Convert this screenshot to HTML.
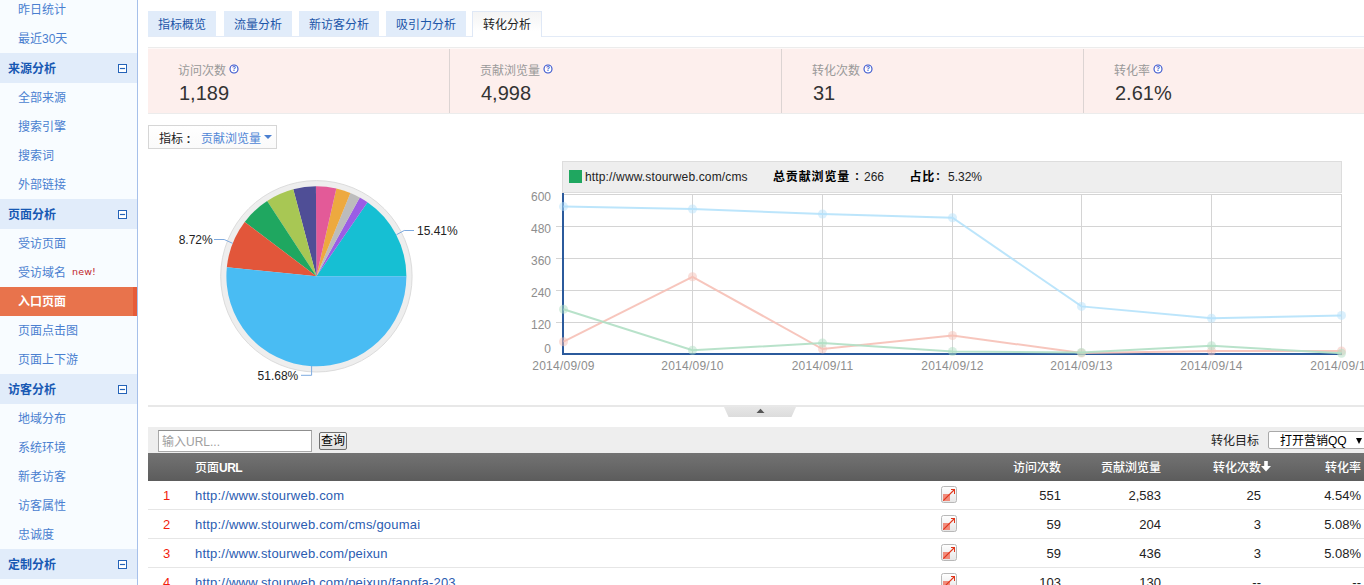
<!DOCTYPE html>
<html lang="zh-CN">
<head>
<meta charset="utf-8">
<title>入口页面 - 转化分析</title>
<style>
*{box-sizing:border-box;margin:0;padding:0}
html,body{width:1364px;height:585px;overflow:hidden;background:#fff}
body{position:relative;font-family:"Liberation Sans","Noto Sans CJK SC",sans-serif;font-size:12px;color:#333}
.abs{position:absolute}
/* sidebar */
#side{position:absolute;left:0;top:-5px;width:138px;height:600px;background:#f8fcff;border-right:1px solid #a6c0ea}
#side .it{height:29px;line-height:27px;padding-top:2px;padding-left:18px;color:#4a7fd0;font-size:12px;position:relative;white-space:nowrap}
#side .hd{height:30px;line-height:28px;padding-top:2px;padding-left:8px;color:#1758b3;font-weight:bold;font-size:12px;background:#e1ecfa;position:relative}
#side .hd i{position:absolute;left:118px;top:11px;width:9px;height:9px;border:1px solid #2463b8;background:#fff}
#side .hd i:after{content:"";position:absolute;left:1px;top:3px;width:5px;height:1px;box-shadow:0 0 1px #2463b8;background:#2463b8}
#side .act{background:#e8734c;color:#fff;font-weight:bold;border-right:4px solid #e65c39}
#side .new{color:#c0272d;font-size:9.5px;margin-left:6px;position:relative;top:-2px;font-family:"DejaVu Sans","Liberation Sans",sans-serif;letter-spacing:.15px}
/* tabs */
.tab{position:absolute;top:11px;height:26px;line-height:28px;text-align:center;background:#e1ecfa;color:#1c55a8;font-size:12px}
.tab.on{background:linear-gradient(#f4f4f4,#fff 80%);color:#222;border:1px solid #dfe8f6;border-bottom:none;height:26px;line-height:27px}
#tabline{position:absolute;left:148px;top:36px;width:1216px;height:1px;background:#e3ebf7}
/* stats */
#stats{position:absolute;left:148px;top:47px;width:1216px;height:67px;background:linear-gradient(to bottom,#fef8f7 0,#fef8f7 1px,#fdefed 1px);border-top:1px solid #ececec;border-bottom:1px solid #ececec}
#stats .c{position:absolute;top:1px;height:64px;border-left:1px solid #dcd4d3}
#stats .l{position:absolute;left:30px;top:14px;color:#999;font-size:12px;white-space:nowrap;line-height:16px}
#stats .v{position:absolute;left:31px;top:31px;color:#333;font-size:20px;line-height:26px;white-space:nowrap}
.q{display:inline-block;width:10px;height:10px;vertical-align:top;margin-top:1px;margin-left:3px;overflow:visible}
/* selector */
#sel{position:absolute;left:148px;top:125px;width:129px;height:24px;border:1px solid #d6d6d6;background:linear-gradient(#fff,#fafafa);line-height:21px;padding-top:3px;padding-left:10px;font-size:12px;color:#222;white-space:nowrap}
#sel span{color:#4f86d6;margin-left:7px}
#sel em{font-style:normal;display:inline-block;width:11px;text-align:center;font-weight:bold}
#sel b{position:absolute;left:115px;top:9px;border:4px solid transparent;border-top:4px solid #4a7fd0;border-bottom:none}
/* table */
#fbar .inp{position:absolute;left:10px;top:3px;width:154px;height:22px;border:1px solid #a9a9a9;border-top-color:#8f8f8f;background:#fff;color:#a0a0a0;font-size:12px;line-height:22px;padding-left:3px}
#fbar .btn{position:absolute;left:171px;top:5px;width:28px;height:18px;border:1px solid #707070;border-radius:2px;background:linear-gradient(#f6f6f6,#dedede);color:#000;font-size:12px;line-height:17px;text-align:center}
#fbar .lbl{position:absolute;left:1063px;top:0;line-height:28px;color:#222;font-size:12px}
#fbar .slt{position:absolute;left:1120px;top:4px;width:110px;height:18px;border:1px solid #a9a9a9;border-radius:2px;background:#fff;color:#000;font-size:12px;line-height:18px;padding-left:11px;white-space:nowrap}
#fbar .slt i{position:absolute;left:87px;top:6px;font-size:0;border:3.5px solid transparent;border-top:6px solid #000;border-bottom:none}
.ico{position:absolute;left:793px;top:5px}

#fbar{position:absolute;left:148px;top:427px;width:1216px;height:26px;background:#eee}
#thead{position:absolute;left:148px;top:453px;width:1216px;height:28px;background:linear-gradient(#737373,#5c5c5c);color:#fff;font-weight:500;font-size:12px;line-height:30px}
.row{color:#222;position:absolute;left:148px;width:1216px;height:29px;border-bottom:1px solid #e6e6e6;line-height:30px;font-size:13px}
.row span,#thead span{position:absolute;white-space:nowrap}
.row .n{left:15px;color:#f21d0d;font-size:13px}
.row .u{left:47px;color:#2b5cb1;letter-spacing:.21px}
.r{text-align:right}
</style>
</head>
<body>
<div id="side">
<div class="it">昨日统计</div>
<div class="it">最近30天</div>
<div class="hd">来源分析<i></i></div>
<div class="it">全部来源</div>
<div class="it">搜索引擎</div>
<div class="it">搜索词</div>
<div class="it">外部链接</div>
<div class="hd">页面分析<i></i></div>
<div class="it">受访页面</div>
<div class="it">受访域名<span class="new">new!</span></div>
<div class="it act">入口页面</div>
<div class="it">页面点击图</div>
<div class="it">页面上下游</div>
<div class="hd">访客分析<i></i></div>
<div class="it">地域分布</div>
<div class="it">系统环境</div>
<div class="it">新老访客</div>
<div class="it">访客属性</div>
<div class="it">忠诚度</div>
<div class="hd">定制分析<i></i></div>
<div class="it">&nbsp;</div>
</div>

<div class="tab" style="left:148px;width:68px">指标概览</div>
<div class="tab" style="left:224px;width:68px">流量分析</div>
<div class="tab" style="left:299px;width:80px">新访客分析</div>
<div class="tab" style="left:386px;width:80px">吸引力分析</div>
<div id="tabline"></div>
<div class="tab on" style="left:472px;width:70px">转化分析</div>

<div id="stats">
<div class="c" style="left:0;width:301px;border-left:none"><div class="l">访问次数<svg class="q" viewBox="0 0 10 10"><circle cx="5" cy="5" r="4" fill="#fff" stroke="#3350cc" stroke-width="1.1"/><text x="5" y="7.4" font-size="6.5" font-weight="bold" text-anchor="middle" fill="#3350cc" font-family="Liberation Sans, sans-serif">?</text></svg></div><div class="v">1,189</div></div>
<div class="c" style="left:301px;width:332px"><div class="l">贡献浏览量<svg class="q" viewBox="0 0 10 10"><circle cx="5" cy="5" r="4" fill="#fff" stroke="#3350cc" stroke-width="1.1"/><text x="5" y="7.4" font-size="6.5" font-weight="bold" text-anchor="middle" fill="#3350cc" font-family="Liberation Sans, sans-serif">?</text></svg></div><div class="v">4,998</div></div>
<div class="c" style="left:633px;width:302px"><div class="l">转化次数<svg class="q" viewBox="0 0 10 10"><circle cx="5" cy="5" r="4" fill="#fff" stroke="#3350cc" stroke-width="1.1"/><text x="5" y="7.4" font-size="6.5" font-weight="bold" text-anchor="middle" fill="#3350cc" font-family="Liberation Sans, sans-serif">?</text></svg></div><div class="v">31</div></div>
<div class="c" style="left:935px;width:281px"><div class="l">转化率<svg class="q" viewBox="0 0 10 10"><circle cx="5" cy="5" r="4" fill="#fff" stroke="#3350cc" stroke-width="1.1"/><text x="5" y="7.4" font-size="6.5" font-weight="bold" text-anchor="middle" fill="#3350cc" font-family="Liberation Sans, sans-serif">?</text></svg></div><div class="v">2.61%</div></div>
</div>

<div id="sel">指标<em>:</em><span>贡献浏览量</span><b></b></div>

<!-- CHARTS -->
<svg class="abs" style="left:148px;top:155px" width="1216" height="250" viewBox="148 155 1216 250" font-family="Liberation Sans, sans-serif" font-size="12">
<!-- pie -->
<g id="pie">
<circle cx="316.4" cy="276.3" r="95.7" fill="#eeeeee" stroke="#dcdcdc" stroke-width="1"/>
<path d="M316.4,276.3L406.40,276.30A90,90 0 0 0 367.51,202.22Z" fill="#16bfd3"/>
<path d="M316.4,276.3L367.51,202.22A90,90 0 0 0 359.76,197.43Z" fill="#9b5de5"/>
<path d="M316.4,276.3L359.76,197.43A90,90 0 0 0 350.41,192.97Z" fill="#bcbcbc"/>
<path d="M316.4,276.3L350.41,192.97A90,90 0 0 0 336.34,188.54Z" fill="#eda93f"/>
<path d="M316.4,276.3L336.34,188.54A90,90 0 0 0 315.93,186.30Z" fill="#e35a98"/>
<path d="M316.4,276.3L315.93,186.30A90,90 0 0 0 293.26,189.33Z" fill="#4f4e96"/>
<path d="M316.4,276.3L293.26,189.33A90,90 0 0 0 267.12,200.99Z" fill="#a8c754"/>
<path d="M316.4,276.3L267.12,200.99A90,90 0 0 0 244.71,221.89Z" fill="#1fa760"/>
<path d="M316.4,276.3L244.71,221.89A90,90 0 0 0 226.86,267.20Z" fill="#e2563a"/>
<path d="M316.4,276.3L226.86,267.20A90,90 0 1 0 406.40,276.30Z" fill="#49bcf3"/>
<path d="M396.5,234.7L404.2,230.5H414" fill="none" stroke="#7eaadf" stroke-width="1"/>
<text x="417" y="235" fill="#222">15.41%</text>
<path d="M232.8,243.4L224.2,239.5H214" fill="none" stroke="#7eaadf" stroke-width="1"/>
<text x="178.7" y="244" fill="#222">8.72%</text>
<path d="M311.6,366V375.3H301" fill="none" stroke="#7eaadf" stroke-width="1"/>
<text x="257.6" y="380" fill="#222">51.68%</text>
</g>
<!-- line chart -->
<g id="line">
<rect x="562.5" y="161.5" width="779" height="31" fill="#eeeeee" stroke="#dddddd"/>
<rect x="569" y="170" width="13" height="13" fill="#1fa760"/>
<text x="585" y="181" fill="#222" letter-spacing="0.15">http://www.stourweb.com/cms</text>
<text x="773" y="181" fill="#000" font-weight="bold" letter-spacing="0.85" font-family="Liberation Sans, Noto Sans CJK SC, sans-serif">总贡献浏览量</text>
<text x="855" y="180" fill="#000" font-weight="bold">:</text>
<text x="864" y="181" fill="#222">266</text>
<text x="909.5" y="181" fill="#000" font-weight="bold" letter-spacing="0.85" font-family="Liberation Sans, Noto Sans CJK SC, sans-serif">占比</text>
<text x="936" y="180" fill="#000" font-weight="bold">:</text>
<text x="948" y="181" fill="#222">5.32%</text>
<path d="M563,194.5H1342M556,226.5H1342M556,258.5H1342M556,290.5H1342M556,322.5H1342M692.5,194V354M822.5,194V354M952.5,194V354M1081.5,194V354M1211.5,194V354M1341.5,194V354" stroke="#d4d4d4" stroke-width="1" fill="none"/>
<text x="551" y="201" fill="#8e8e8e" text-anchor="end">600</text>
<text x="551" y="233" fill="#8e8e8e" text-anchor="end">480</text>
<text x="551" y="265" fill="#8e8e8e" text-anchor="end">360</text>
<text x="551" y="297" fill="#8e8e8e" text-anchor="end">240</text>
<text x="551" y="329" fill="#8e8e8e" text-anchor="end">120</text>
<text x="551" y="353" fill="#8e8e8e" text-anchor="end">0</text>
<text x="563.5" y="370" fill="#8e8e8e" letter-spacing="0.25" text-anchor="middle">2014/09/09</text>
<text x="692.5" y="370" fill="#8e8e8e" letter-spacing="0.25" text-anchor="middle">2014/09/10</text>
<text x="822.5" y="370" fill="#8e8e8e" letter-spacing="0.25" text-anchor="middle">2014/09/11</text>
<text x="952.5" y="370" fill="#8e8e8e" letter-spacing="0.25" text-anchor="middle">2014/09/12</text>
<text x="1081.5" y="370" fill="#8e8e8e" letter-spacing="0.25" text-anchor="middle">2014/09/13</text>
<text x="1211.5" y="370" fill="#8e8e8e" letter-spacing="0.25" text-anchor="middle">2014/09/14</text>
<text x="1341.5" y="370" fill="#8e8e8e" letter-spacing="0.25" text-anchor="middle">2014/09/15</text>
<path d="M563,193V355M562,354H1342" stroke="#2b5a9c" stroke-width="2" fill="none"/>
<polyline points="563.5,206.6 692.5,209 822.5,214 952.5,217.7 1081.5,306.4 1211.5,318.3 1341.5,315.4" fill="none" stroke="#b5e2fb" stroke-width="2" stroke-opacity="0.9"/>
<circle cx="563.5" cy="206.6" r="4.5" fill="#b5e2fb" fill-opacity="0.5"/>
<circle cx="692.5" cy="209" r="4.5" fill="#b5e2fb" fill-opacity="0.5"/>
<circle cx="822.5" cy="214" r="4.5" fill="#b5e2fb" fill-opacity="0.5"/>
<circle cx="952.5" cy="217.7" r="4.5" fill="#b5e2fb" fill-opacity="0.5"/>
<circle cx="1081.5" cy="306.4" r="4.5" fill="#b5e2fb" fill-opacity="0.5"/>
<circle cx="1211.5" cy="318.3" r="4.5" fill="#b5e2fb" fill-opacity="0.5"/>
<circle cx="1341.5" cy="315.4" r="4.5" fill="#b5e2fb" fill-opacity="0.5"/>
<polyline points="563.5,341.7 692.5,276.8 822.5,349 952.5,335.5 1081.5,353 1211.5,351 1341.5,351" fill="none" stroke="#f6c0b6" stroke-width="2" stroke-opacity="0.9"/>
<circle cx="563.5" cy="341.7" r="4.5" fill="#f6c0b6" fill-opacity="0.5"/>
<circle cx="692.5" cy="276.8" r="4.5" fill="#f6c0b6" fill-opacity="0.5"/>
<circle cx="822.5" cy="349" r="4.5" fill="#f6c0b6" fill-opacity="0.5"/>
<circle cx="952.5" cy="335.5" r="4.5" fill="#f6c0b6" fill-opacity="0.5"/>
<circle cx="1081.5" cy="353" r="4.5" fill="#f6c0b6" fill-opacity="0.5"/>
<circle cx="1211.5" cy="351" r="4.5" fill="#f6c0b6" fill-opacity="0.5"/>
<circle cx="1341.5" cy="351" r="4.5" fill="#f6c0b6" fill-opacity="0.5"/>
<polyline points="563.5,309.3 692.5,350.3 822.5,343 952.5,351.5 1081.5,352.4 1211.5,345.8 1341.5,353.2" fill="none" stroke="#b0dfc4" stroke-width="2" stroke-opacity="0.9"/>
<circle cx="563.5" cy="309.3" r="4.5" fill="#b0dfc4" fill-opacity="0.5"/>
<circle cx="692.5" cy="350.3" r="4.5" fill="#b0dfc4" fill-opacity="0.5"/>
<circle cx="822.5" cy="343" r="4.5" fill="#b0dfc4" fill-opacity="0.5"/>
<circle cx="952.5" cy="351.5" r="4.5" fill="#b0dfc4" fill-opacity="0.5"/>
<circle cx="1081.5" cy="352.4" r="4.5" fill="#b0dfc4" fill-opacity="0.5"/>
<circle cx="1211.5" cy="345.8" r="4.5" fill="#b0dfc4" fill-opacity="0.5"/>
<circle cx="1341.5" cy="353.2" r="4.5" fill="#b0dfc4" fill-opacity="0.5"/>
</g>
</svg>

<!-- collapse -->
<div class="abs" style="left:148px;top:405px;width:1216px;height:2px;background:#e8e8e8"></div>
<svg class="abs" style="left:724px;top:407px" width="72" height="10"><defs><linearGradient id="hg" x1="0" y1="0" x2="0" y2="1"><stop offset="0" stop-color="#e6e6e6"/><stop offset="1" stop-color="#dcdcdc"/></linearGradient></defs><polygon points="0,0 72,0 67.5,10 4.5,10" fill="url(#hg)"/><polygon points="32.5,6 40.5,6 36.5,1.8" fill="#555"/></svg>

<div id="fbar">
<div class="inp">输入URL...</div>
<div class="btn">查询</div>
<div class="lbl">转化目标</div>
<div class="slt">打开营销QQ<i>▼</i></div>
</div>
<div id="thead"><span style="left:47px">页面<b style="letter-spacing:-.5px">URL</b></span><span class="r" style="right:303px">访问次数</span><span class="r" style="right:203px">贡献浏览量</span><span class="r" style="right:93px">转化次数<svg width="10" height="11" viewBox="0 0 10 11" style="vertical-align:0px;margin-left:0"><path d="M3.2,0H6.8V5H10L5,10.5L0,5H3.2Z" fill="#fff"/></svg></span><span class="r" style="right:3px">转化率</span></div>
<div class="row" style="top:481px"><span class="n">1</span><span class="u">http://www.stourweb.com</span><svg class="ico" width="16" height="17" viewBox="0 0 16 17"><defs><linearGradient id="ig" x1="0" y1="0" x2="0" y2="1"><stop offset="0" stop-color="#fff"/><stop offset="1" stop-color="#e6e6e6"/></linearGradient></defs><rect x="0.5" y="0.5" width="15" height="16" rx="2" fill="url(#ig)" stroke="#b8b8b8"/><rect x="2" y="8" width="7" height="7" fill="#f08b7b"/><path d="M2.3,14.7L13.5,3.5" fill="none" stroke="#e0351a" stroke-width="1.1"/><path d="M10,3.5H14M13.5,3V8" fill="none" stroke="#e0351a" stroke-width="1" shape-rendering="crispEdges"/></svg><span class="r" style="right:303px">551</span><span class="r" style="right:203px">2,583</span><span class="r" style="right:103px">25</span><span class="r" style="right:3px">4.54%</span></div>
<div class="row" style="top:510px"><span class="n">2</span><span class="u">http://www.stourweb.com/cms/goumai</span><svg class="ico" width="16" height="17" viewBox="0 0 16 17"><defs><linearGradient id="ig" x1="0" y1="0" x2="0" y2="1"><stop offset="0" stop-color="#fff"/><stop offset="1" stop-color="#e6e6e6"/></linearGradient></defs><rect x="0.5" y="0.5" width="15" height="16" rx="2" fill="url(#ig)" stroke="#b8b8b8"/><rect x="2" y="8" width="7" height="7" fill="#f08b7b"/><path d="M2.3,14.7L13.5,3.5" fill="none" stroke="#e0351a" stroke-width="1.1"/><path d="M10,3.5H14M13.5,3V8" fill="none" stroke="#e0351a" stroke-width="1" shape-rendering="crispEdges"/></svg><span class="r" style="right:303px">59</span><span class="r" style="right:203px">204</span><span class="r" style="right:103px">3</span><span class="r" style="right:3px">5.08%</span></div>
<div class="row" style="top:539px"><span class="n">3</span><span class="u">http://www.stourweb.com/peixun</span><svg class="ico" width="16" height="17" viewBox="0 0 16 17"><defs><linearGradient id="ig" x1="0" y1="0" x2="0" y2="1"><stop offset="0" stop-color="#fff"/><stop offset="1" stop-color="#e6e6e6"/></linearGradient></defs><rect x="0.5" y="0.5" width="15" height="16" rx="2" fill="url(#ig)" stroke="#b8b8b8"/><rect x="2" y="8" width="7" height="7" fill="#f08b7b"/><path d="M2.3,14.7L13.5,3.5" fill="none" stroke="#e0351a" stroke-width="1.1"/><path d="M10,3.5H14M13.5,3V8" fill="none" stroke="#e0351a" stroke-width="1" shape-rendering="crispEdges"/></svg><span class="r" style="right:303px">59</span><span class="r" style="right:203px">436</span><span class="r" style="right:103px">3</span><span class="r" style="right:3px">5.08%</span></div>
<div class="row" style="top:568px"><span class="n">4</span><span class="u">http://www.stourweb.com/peixun/fangfa-203</span><svg class="ico" width="16" height="17" viewBox="0 0 16 17"><defs><linearGradient id="ig" x1="0" y1="0" x2="0" y2="1"><stop offset="0" stop-color="#fff"/><stop offset="1" stop-color="#e6e6e6"/></linearGradient></defs><rect x="0.5" y="0.5" width="15" height="16" rx="2" fill="url(#ig)" stroke="#b8b8b8"/><rect x="2" y="8" width="7" height="7" fill="#f08b7b"/><path d="M2.3,14.7L13.5,3.5" fill="none" stroke="#e0351a" stroke-width="1.1"/><path d="M10,3.5H14M13.5,3V8" fill="none" stroke="#e0351a" stroke-width="1" shape-rendering="crispEdges"/></svg><span class="r" style="right:303px">103</span><span class="r" style="right:203px">130</span><span class="r" style="right:103px">--</span><span class="r" style="right:3px">--</span></div>
</body>
</html>
